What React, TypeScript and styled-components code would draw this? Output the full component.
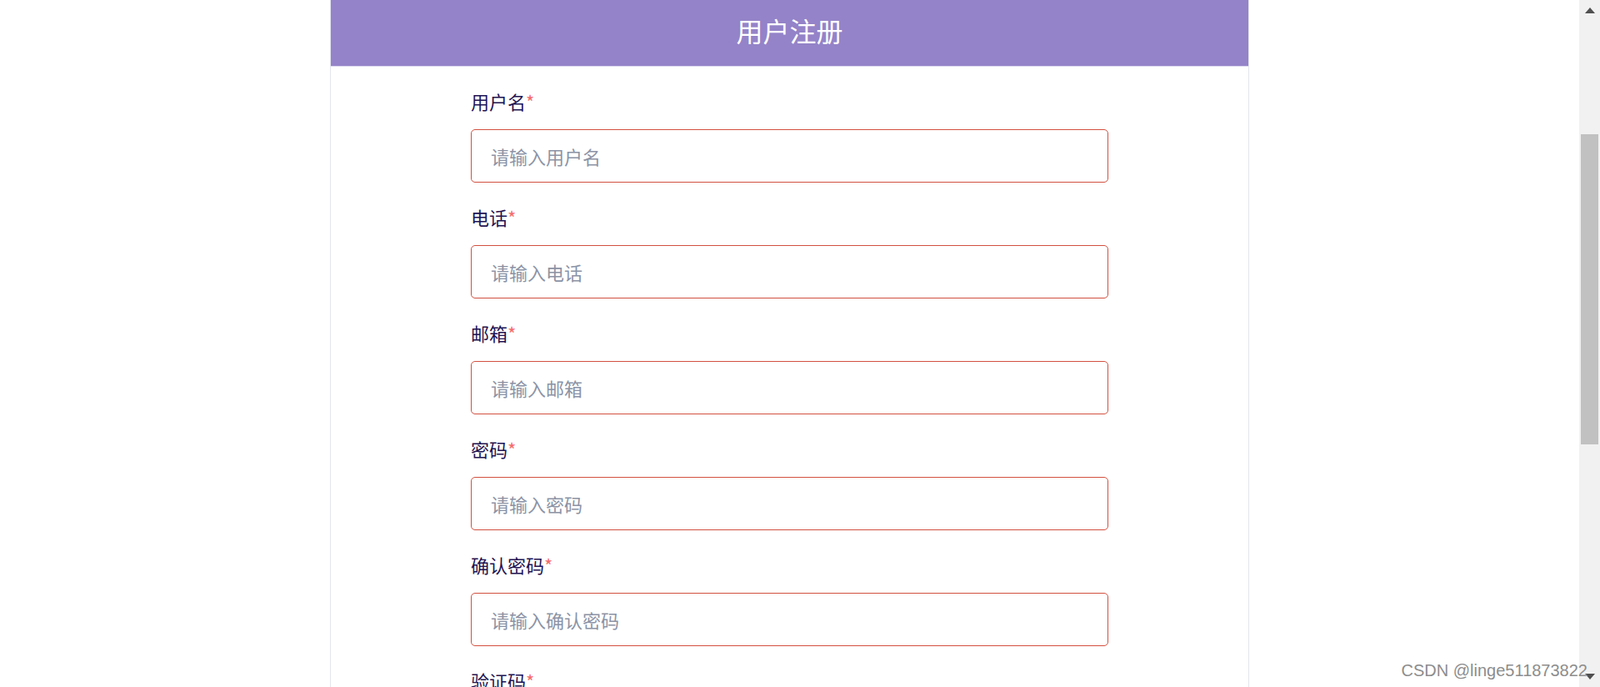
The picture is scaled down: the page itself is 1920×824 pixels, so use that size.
import React from "react";
import styled, { createGlobalStyle } from "styled-components";

const GlobalStyle = createGlobalStyle`
  html, body {
    margin: 0;
    padding: 0;
    height: 100%;
    overflow: hidden;
    background: #ffffff;
    font-family: "Noto Sans CJK SC", "Noto Sans", sans-serif;
  }
  #root { height: 100%; }
  * { box-sizing: border-box; }
`;

const Screen = styled.div`
  position: relative;
  display: flex;
  width: 100%;
  height: 824px;
  overflow: hidden;
`;

const Page = styled.main`
  flex: 1;
  display: flex;
  justify-content: center;
  align-items: flex-start;
  background: #ffffff;
`;

const Card = styled.section`
  width: 1103px;
  min-height: 1000px;
  border-left: 1px solid #e3e5ee;
  border-right: 1px solid #e3e5ee;
  background: #ffffff;
`;

const Header = styled.header`
  height: 80px;
  background: #9483c8;
  border-bottom: 1px solid #dcd7ee;
  display: flex;
  align-items: center;
  justify-content: center;
  padding-bottom: 7px;
`;

const Title = styled.h1`
  margin: 0;
  font-size: 32px;
  font-weight: 400;
  color: #ffffff;
  line-height: 1;
`;

const Form = styled.form`
  width: 765px;
  margin: 0 auto;
  padding-top: 25px;
`;

const Field = styled.div`
  margin-bottom: 25px;
`;

const Label = styled.label`
  display: block;
  font-size: 22px;
  line-height: 33px;
  color: #1f1452;
  margin-bottom: 17px;
`;

const Required = styled.span`
  color: #f56c6c;
`;

const Input = styled.input`
  display: block;
  width: 100%;
  height: 64px;
  border: 1px solid #d2503f;
  border-radius: 5px;
  padding: 0 23px;
  font-family: "Noto Sans CJK SC", "Noto Sans", sans-serif;
  font-size: 22px;
  color: #333;
  background: #ffffff;
  outline: none;
  &::placeholder {
    color: #8c93a5;
  }
`;

const ScrollBar = styled.div`
  width: 25px;
  flex: none;
  display: flex;
  flex-direction: column;
  background: #f1f1f1;
`;

const ArrowButton = styled.div`
  height: 25px;
  flex: none;
  display: flex;
  align-items: center;
  justify-content: center;
`;

const Track = styled.div`
  flex: 1;
  display: flex;
  flex-direction: column;
  padding: 136px 2px 0 2px;
`;

const Thumb = styled.div`
  height: 372px;
  background: #c1c1c1;
`;

const Watermark = styled.div`
  position: absolute;
  right: 15px;
  bottom: 8px;
  font-family: "Liberation Sans", Arial, sans-serif;
  font-size: 20px;
  color: #8d8d8d;
  text-shadow: 0 0 1px rgba(255, 255, 255, 0.9);
  white-space: nowrap;
`;

const fields = [
  { label: "用户名", placeholder: "请输入用户名", type: "text" },
  { label: "电话", placeholder: "请输入电话", type: "text" },
  { label: "邮箱", placeholder: "请输入邮箱", type: "text" },
  { label: "密码", placeholder: "请输入密码", type: "password" },
  { label: "确认密码", placeholder: "请输入确认密码", type: "password" },
  { label: "验证码", placeholder: "请输入验证码", type: "text" },
];

export default function App() {
  return (
    <>
      <GlobalStyle />
      <Screen>
        <Page>
          <Card>
            <Header>
              <Title>用户注册</Title>
            </Header>
            <Form onSubmit={(e) => e.preventDefault()}>
              {fields.map((f) => (
                <Field key={f.label}>
                  <Label>
                    {f.label}
                    <Required>*</Required>
                  </Label>
                  <Input type={f.type} placeholder={f.placeholder} />
                </Field>
              ))}
            </Form>
          </Card>
        </Page>
        <ScrollBar>
          <ArrowButton>
            <svg width="12" height="7" viewBox="0 0 12 7">
              <polygon points="6,0 12,7 0,7" fill="#505050" />
            </svg>
          </ArrowButton>
          <Track>
            <Thumb />
          </Track>
          <ArrowButton>
            <svg width="12" height="7" viewBox="0 0 12 7">
              <polygon points="0,0 12,0 6,7" fill="#505050" />
            </svg>
          </ArrowButton>
        </ScrollBar>
        <Watermark>CSDN @linge511873822</Watermark>
      </Screen>
    </>
  );
}
